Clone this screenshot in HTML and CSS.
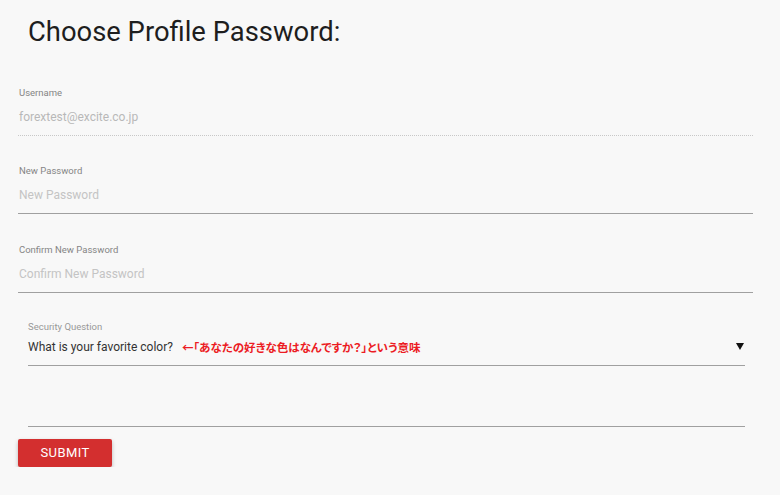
FILE: index.html
```html
<!DOCTYPE html>
<html lang="en">
<head>
<meta charset="utf-8">
<title>Choose Profile Password</title>
<link rel="stylesheet" href="styles.css">
</head>
<body>
<div class="page">
  <h1 class="title">Choose Profile Password:</h1>
  <form class="form">
    <div class="field dotted">
      <div class="label">Username</div>
      <div class="value readonly">forextest@excite.co.jp</div>
    </div>
    <div class="field">
      <div class="label">New Password</div>
      <div class="value placeholder">New Password</div>
    </div>
    <div class="field">
      <div class="label">Confirm New Password</div>
      <div class="value placeholder">Confirm New Password</div>
    </div>
    <div class="field select">
      <div class="label">Security Question</div>
      <div class="select-row">
        <span class="selected">What is your favorite color?</span>
        <span class="note">←「あなたの好きな色はなんですか？」という意味</span>
        <svg class="caret" width="8" height="7" viewBox="0 0 8 7"><path d="M0 0H8L4 7Z" fill="#111"/></svg>
      </div>
    </div>
    <div class="field blank"></div>
    <button type="button" class="submit">SUBMIT</button>
  </form>
</div>
</body>
</html>
```

FILE: styles.css
```css
html, body {
  margin: 0;
  padding: 0;
  background: #f8f8f8;
}

body {
  font-family: Roboto, "Noto Sans", Arial, sans-serif;
  color: #222;
}

.page {
  padding: 15px 27px 0 18px;
}

.title {
  margin: 0 0 8px 0;
  padding-left: 10px;
  font-size: 27.4px;
  font-weight: 400;
  line-height: 34px;
  color: #1e1e1e;
}

.form {
  display: flex;
  flex-direction: column;
}

.field {
  padding: 28.5px 0 10px 0;
  border-bottom: 1px solid #a0a0a0;
}

.field.dotted {
  border-bottom: 1px dotted #c8c8c8;
}

.label {
  font-size: 9.5px;
  line-height: 13px;
  color: #858585;
  padding-left: 1px;
}

.value {
  margin-top: 10px;
  font-size: 12px;
  line-height: 16px;
  padding-left: 1px;
}

.value.readonly {
  color: #b8b8b8;
}

.value.placeholder {
  color: #c4c4c4;
}

.field.select {
  margin: 0 8px 0 10px;
  padding: 27px 0 10px 0;
}

.field.select .label {
  padding-left: 0;
  color: #999;
}

.select-row {
  margin-top: 6px;
  display: flex;
  align-items: center;
  height: 16px;
  font-size: 12px;
  line-height: 16px;
}

.selected {
  color: #333;
}

.note {
  margin-left: 9px;
  font-family: "Noto Sans CJK JP", sans-serif;
  font-weight: 700;
  font-size: 11.5px;
  font-feature-settings: "palt";
  color: #ec1c24;
}

.caret {
  margin-left: auto;
  margin-right: 1px;
}

.field.blank {
  margin: 0 8px 0 10px;
  padding: 0;
  height: 60px;
}

.submit {
  align-self: flex-start;
  margin-top: 12px;
  width: 94px;
  height: 28px;
  border: none;
  border-radius: 2px;
  background: #d32f2f;
  color: #fff;
  font-family: Roboto, Arial, sans-serif;
  font-size: 13px;
  font-weight: 400;
  letter-spacing: 0.4px;
  box-shadow: 0 2px 4px rgba(0, 0, 0, 0.26);
  cursor: pointer;
}
```
